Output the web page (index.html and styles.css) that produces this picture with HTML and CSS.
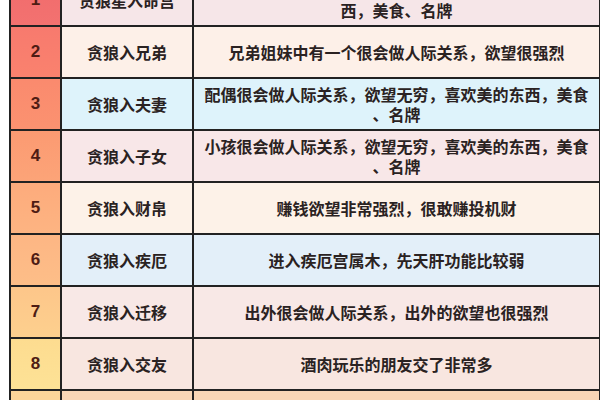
FILE: index.html
```html
<!DOCTYPE html>
<html lang="zh">
<head>
<meta charset="utf-8">
<title>贪狼星</title>
<link rel="stylesheet" href="styles.css">
</head>
<body>
<div class="page">
<table class="tbl">
<colgroup><col class="c-num"><col class="c-name"><col class="c-desc"></colgroup>
<tbody>
<tr class="r1"><td class="num">1</td><td class="name">贪狼星入命宫</td><td class="desc">很会做人际关系，欲望无穷，喜欢美的东<br>西，美食、名牌</td></tr>
<tr class="r2"><td class="num">2</td><td class="name">贪狼入兄弟</td><td class="desc">兄弟姐妹中有一个很会做人际关系，欲望很强烈</td></tr>
<tr class="r3"><td class="num">3</td><td class="name">贪狼入夫妻</td><td class="desc">配偶很会做人际关系，欲望无穷，喜欢美的东西，美食<br>、名牌</td></tr>
<tr class="r4"><td class="num">4</td><td class="name">贪狼入子女</td><td class="desc">小孩很会做人际关系，欲望无穷，喜欢美的东西，美食<br>、名牌</td></tr>
<tr class="r5"><td class="num">5</td><td class="name">贪狼入财帛</td><td class="desc">赚钱欲望非常强烈，很敢赚投机财</td></tr>
<tr class="r6"><td class="num">6</td><td class="name">贪狼入疾厄</td><td class="desc">进入疾厄宫属木，先天肝功能比较弱</td></tr>
<tr class="r7"><td class="num">7</td><td class="name">贪狼入迁移</td><td class="desc">出外很会做人际关系，出外的欲望也很强烈</td></tr>
<tr class="r8"><td class="num">8</td><td class="name">贪狼入交友</td><td class="desc">酒肉玩乐的朋友交了非常多</td></tr>
<tr class="r9"><td class="num">9</td><td class="name">贪狼入官禄</td><td class="desc">事业心很强</td></tr>
</tbody>
</table>
</div>
</body>
</html>
```
FILE: styles.css
```css
html, body {
  margin: 0;
  padding: 0;
  background: #ffffff;
  overflow: hidden;
}
.page {
  width: 600px;
  height: 400px;
  overflow: hidden;
  padding-left: 9px;
  box-sizing: border-box;
}
.tbl {
  border-collapse: collapse;
  table-layout: fixed;
  width: 590px;
  margin-top: -27px;
  font-family: "Noto Sans CJK SC", "Noto Sans", sans-serif;
  font-weight: 700;
  color: #2a2222;
}
.c-num { width: 51px; }
.c-name { width: 132px; }
.c-desc { width: 407px; }
.tbl td {
  border: 2px solid #222222;
  height: 52px;
  padding: 0 4px;
  text-align: center;
  vertical-align: middle;
  font-size: 16px;
  line-height: 20px;
  box-sizing: border-box;
}
.tbl td.num {
  font-family: "Liberation Sans", Arial, sans-serif;
  font-weight: 700;
  font-size: 17px;
  color: #4e1c14;
}
.r1 .num { background: linear-gradient(#f06a6c, #f37270); }
.r2 .num { background: linear-gradient(#f77a6e, #fa826e); }
.r3 .num { background: linear-gradient(#fa8a6e, #fb9270); }
.r4 .num { background: linear-gradient(#fb9a72, #fca478); }
.r5 .num { background: linear-gradient(#fdab7c, #fdb482); }
.r6 .num { background: linear-gradient(#fdb684, #fdbe88); }
.r7 .num { background: linear-gradient(#fdc68a, #fdd08e); }
.r8 .num { background: linear-gradient(#fddc90, #fde296); }
.r9 .num { background: #fcd59a; }

.r1 .name, .r1 .desc { background: #f6e6e8; }
.r2 .name, .r2 .desc { background: #fdf0e8; }
.r3 .name, .r3 .desc { background: #def3fb; }
.r4 .name, .r4 .desc { background: #f8e7e8; }
.r5 .name, .r5 .desc { background: #fdf2e8; }
.r6 .name, .r6 .desc { background: #e3eff9; }
.r7 .name, .r7 .desc { background: #f8e8e6; }
.r8 .name, .r8 .desc { background: #f8e6e0; }
.r9 .name, .r9 .desc { background: #f8d6b6; }
```
